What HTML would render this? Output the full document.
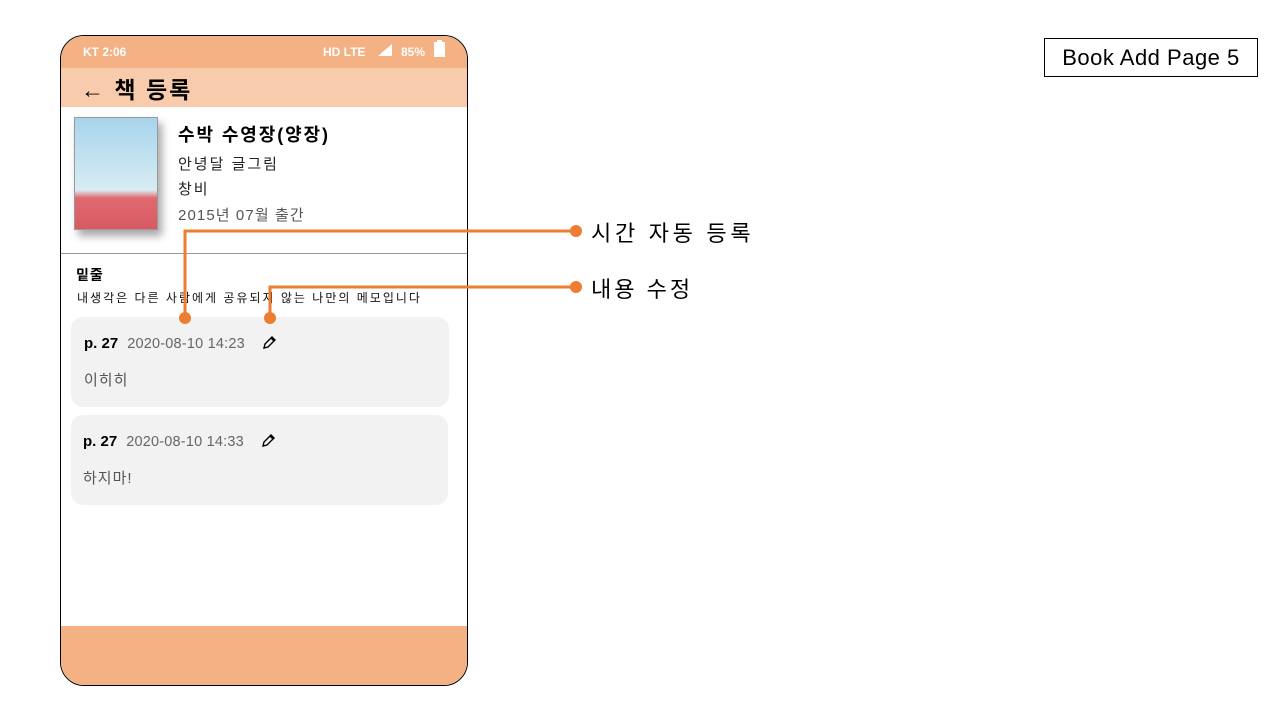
<!DOCTYPE html>
<html><head><meta charset="utf-8"><style>
body{margin:0;width:1280px;height:720px;background:#fff;position:relative;overflow:hidden;font-family:"Liberation Sans","Noto Sans CJK KR",sans-serif;}
.abs{position:absolute}
.phone{left:60px;top:35px;width:406px;height:649px;border:1px solid #000;border-radius:24px;overflow:hidden;background:#fff}
.card{background:#f2f2f2;border-radius:12px;width:378px;height:90px;left:10px}
.pg{font-size:15px;font-weight:bold;color:#000}
.dt{font-size:14.5px;color:#666;margin-left:9px;letter-spacing:0.2px}
.memo{font-size:15px;color:#555;letter-spacing:1px}
</style></head><body>
<div class="abs phone">
 <div class="abs" style="left:0;top:0;width:406px;height:32px;background:#f4b183"></div>
 <div class="abs" style="left:22px;top:9px;font-size:12px;font-weight:bold;color:#fff">KT 2:06</div>
 <div class="abs" style="left:262px;top:9px;font-size:12px;font-weight:bold;color:#fff">HD LTE</div>
 <svg class="abs" style="left:316px;top:7px" width="16" height="14"><polygon points="1,13 15,13 15,1" fill="#fff"/></svg>
 <div class="abs" style="left:340px;top:9px;font-size:12px;font-weight:bold;color:#fff">85%</div>
 <div class="abs" style="left:373px;top:6px;width:11px;height:15px;background:#fff"></div>
 <div class="abs" style="left:376px;top:4px;width:5px;height:3px;background:#fff"></div>
 <div class="abs" style="left:0;top:32px;width:406px;height:39px;background:#f8cbad"></div>
 <div class="abs" style="left:20px;top:35px;font-size:23px;font-weight:bold;letter-spacing:2px">← 책 등록</div>
 <div class="abs" style="left:13px;top:81px;width:82px;height:111px;background:linear-gradient(#a8d4ec 0%,#d8ecf4 65%,#e06a70 72%,#d85a62 100%);border:1px solid #999;box-shadow:4px 6px 8px rgba(0,0,0,.35)"></div>
 <div class="abs" style="left:117px;top:85px;font-size:18px;font-weight:bold;letter-spacing:1.9px">수박 수영장(양장)</div>
 <div class="abs" style="left:117px;top:117px;font-size:15px;color:#222;letter-spacing:2px">안녕달 글그림</div>
 <div class="abs" style="left:117px;top:142px;font-size:15px;color:#222;letter-spacing:2px">창비</div>
 <div class="abs" style="left:117px;top:168px;font-size:15px;color:#555;letter-spacing:1.1px">2015년 07월 출간</div>
 <div class="abs" style="left:0;top:217px;width:406px;height:1px;background:#999"></div>
 <div class="abs" style="left:15px;top:229px;font-size:14px;font-weight:bold;letter-spacing:1px">밑줄</div>
 <div class="abs" style="left:16px;top:253px;font-size:12px;color:#111;letter-spacing:2px">내생각은 다른 사람에게 공유되지 않는 나만의 메모입니다</div>
 <div class="abs card" style="top:281px">
  <div class="abs" style="left:13px;top:18px"><span class="pg">p. 27</span><span class="dt">2020-08-10 14:23</span></div>
  <div class="abs memo" style="left:13px;top:52px">이히히</div>
 </div>
 <div class="abs card" style="top:379px;width:377px">
  <div class="abs" style="left:12px;top:18px"><span class="pg">p. 27</span><span class="dt">2020-08-10 14:33</span></div>
  <div class="abs memo" style="left:12px;top:52px">하지마!</div>
 </div>
 <svg class="abs" style="left:200px;top:299px" width="16" height="16"><path d="M3 13 L4 9 L11 2 L14 5 L7 12 Z M10 3 L13 6" fill="none" stroke="#000" stroke-width="1.4"/></svg>
 <svg class="abs" style="left:199px;top:397px" width="16" height="16"><path d="M3 13 L4 9 L11 2 L14 5 L7 12 Z M10 3 L13 6" fill="none" stroke="#000" stroke-width="1.4"/></svg>
 <div class="abs" style="left:0;top:590px;width:406px;height:60px;background:#f4b183"></div>
</div>
<svg class="abs" style="left:0;top:0" width="1280" height="720">
 <polyline points="185,318 185,231 575,231" fill="none" stroke="#ed7d31" stroke-width="3"/>
 <polyline points="270,318 270,287 575,287" fill="none" stroke="#ed7d31" stroke-width="3"/>
 <circle cx="185" cy="318" r="6" fill="#ed7d31"/><circle cx="270" cy="318" r="6" fill="#ed7d31"/>
 <circle cx="576" cy="231" r="6" fill="#ed7d31"/><circle cx="576" cy="287" r="6" fill="#ed7d31"/>
</svg>
<div class="abs" style="left:591px;top:216px;font-size:22px;letter-spacing:3.7px">시간 자동 등록</div>
<div class="abs" style="left:591px;top:272px;font-size:22px;letter-spacing:3px">내용 수정</div>
<div class="abs" style="left:1044px;top:38px;width:212px;height:37px;border:1px solid #000;font-size:22px;line-height:37px;text-align:center;letter-spacing:0.5px">Book Add Page 5</div>
</body></html>
